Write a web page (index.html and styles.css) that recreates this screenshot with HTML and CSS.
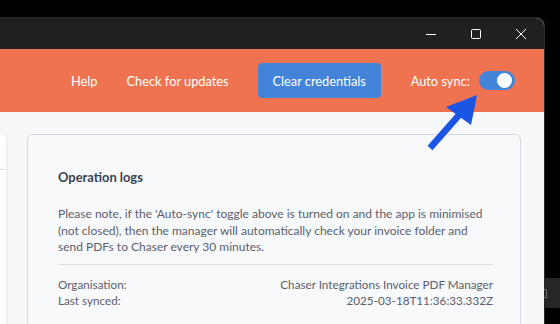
FILE: index.html
```html
<!DOCTYPE html>
<html>
<head>
<meta charset="utf-8">
<link rel="stylesheet" href="styles.css">
</head>
<body>
<div class="desktop">
  <div class="bgwin"><span class="bgicon"></span></div>
  <div class="window">
    <div class="titlebar">
      <div class="tb-btn">
        <svg width="12" height="12" viewBox="0 0 12 12"><path d="M1 6.5H11" stroke="#fff" stroke-width="1"/></svg>
      </div>
      <div class="tb-btn">
        <svg width="12" height="12" viewBox="0 0 12 12"><rect x="1.5" y="1.5" width="9" height="9" rx="1" fill="none" stroke="#fff" stroke-width="1"/></svg>
      </div>
      <div class="tb-btn">
        <svg width="12" height="12" viewBox="0 0 12 12"><path d="M1 1L11 11M11 1L1 11" stroke="#fff" stroke-width="1"/></svg>
      </div>
    </div>
    <header class="appbar">
      <a class="nav-link nav-help">Help</a>
      <a class="nav-link nav-updates">Check for updates</a>
      <button class="btn-clear">Clear credentials</button>
      <span class="sync-label">Auto sync:</span>
      <span class="toggle"><span class="knob"></span></span>
    </header>
    <main class="content">
      <aside class="sidepanel"><div class="side-head"></div></aside>
      <section class="card">
        <h2 class="card-title">Operation logs</h2>
        <p class="note">Please note, if the 'Auto-sync' toggle above is turned on and the app is minimised (not closed), then the manager will automatically check your invoice folder and send PDFs to Chaser every 30 minutes.</p>
        <div class="info">
          <div class="row"><span>Organisation:</span><span>Chaser Integrations Invoice PDF Manager</span></div>
          <div class="row"><span>Last synced:</span><span>2025-03-18T11:36:33.332Z</span></div>
        </div>
      </section>
    </main>
  </div>
  <svg class="arrow" width="560" height="324" viewBox="0 0 560 324">
    <path d="M430 148 L460 114" stroke="#1a55e3" stroke-width="6.5" stroke-linecap="butt"/>
    <polygon points="477,95 446,107 471,125" fill="#1a55e3"/>
  </svg>
</div>
</body>
</html>
```

FILE: styles.css
```css
* { box-sizing: border-box; }
html, body { margin: 0; padding: 0; }
body {
  background: #000;
  width: 560px;
  height: 324px;
  overflow: hidden;
  font-family: Lato, "Noto Sans", sans-serif;
}
.desktop {
  position: relative;
  width: 560px;
  height: 324px;
  padding-top: 18px;
}
.bgwin {
  position: absolute;
  left: 544px;
  top: 278px;
  width: 20px;
  height: 30px;
  background: #262626;
}
.bgicon {
  position: absolute;
  left: 0;
  top: 11px;
  width: 3px;
  height: 9px;
  border: 1px solid #6a6a6a;
  border-left: none;
}
.window {
  width: 544px;
  height: 306px;
  border-top-right-radius: 8px;
  overflow: hidden;
  background: #f7f8fa;
  display: flex;
  flex-direction: column;
  box-shadow: 0 0 0 1px #2c2c2c;
}
.titlebar {
  height: 31px;
  background: #202020;
  display: flex;
  justify-content: flex-end;
  align-items: center;
  padding-right: 1px;
  flex: none;
}
.tb-btn {
  width: 45px;
  height: 31px;
  display: flex;
  align-items: center;
  justify-content: center;
}
.appbar {
  height: 63px;
  background: #ef7350;
  display: flex;
  align-items: center;
  padding-left: 71px;
  flex: none;
  color: #fff;
  font-size: 12.8px;
}
.nav-link { color: #fff; }
.nav-help { margin-right: 29px; }
.nav-updates { margin-right: 29px; }
.btn-clear {
  font: inherit;
  color: #fff;
  background: #4384d9;
  border: none;
  border-radius: 4px;
  height: 35px;
  width: 123px;
  padding: 0;
  margin-right: 30px;
}
.sync-label { margin-right: 9px; }
.toggle {
  width: 36px;
  height: 19px;
  border-radius: 10px;
  background: #4384d9;
  position: relative;
  display: inline-block;
}
.knob {
  position: absolute;
  right: 3px;
  top: 2px;
  width: 15px;
  height: 15px;
  border-radius: 50%;
  background: #fff;
}
.content {
  flex: 1;
  display: flex;
  align-items: flex-start;
  padding-top: 22px;
  gap: 21px;
}
.sidepanel {
  width: 6px;
  height: 200px;
  background: #fff;
  border-top-right-radius: 5px;
  box-shadow: 1px 0 3px rgba(0,0,0,0.08);
}
.side-head {
  height: 36px;
  border-bottom: 1px solid #d9dde3;
}
.card {
  width: 494px;
  height: 220px;
  border: 1px solid #d3d9e2;
  border-radius: 6px;
  background: #f8f9fb;
  padding: 33px 27px 0 30px;
}
.card-title {
  margin: 0;
  font-size: 12.9px;
  font-weight: 700;
  color: #3a4152;
  line-height: 18px;
}
.note {
  margin: 20px 0 0;
  font-size: 12px;
  line-height: 16.5px;
  color: #5b606c;
  padding-bottom: 8px;
  border-bottom: 1px solid #dadee4;
}
.info {
  padding-top: 11px;
  font-size: 11.7px;
  line-height: 16.5px;
  color: #5b606c;
}
.row {
  display: flex;
  justify-content: space-between;
}
.arrow {
  position: absolute;
  left: 0;
  top: 0;
  pointer-events: none;
}
```
